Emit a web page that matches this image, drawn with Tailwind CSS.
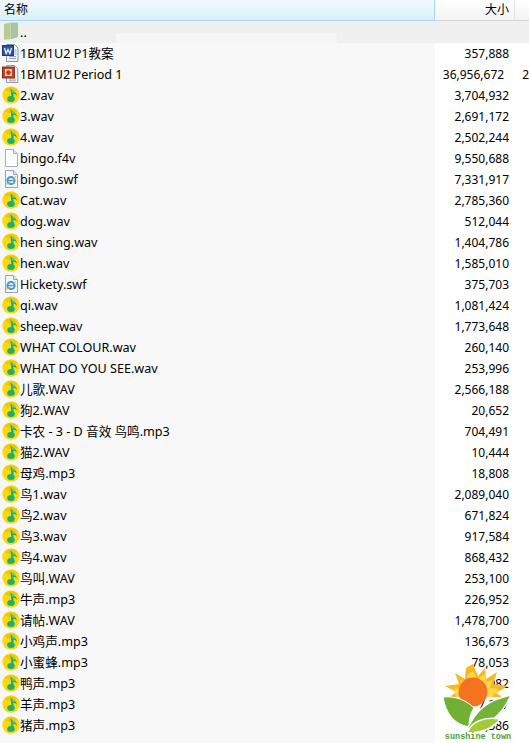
<!DOCTYPE html>
<html lang="zh">
<head>
  <meta charset="UTF-8" />
  <title>文件列表</title>
  <script src="https://cdn.jsdelivr.net/npm/@tailwindcss/browser@4"></script>
</head>
<body class="relative w-[529px] h-[743px] overflow-hidden bg-white text-[12.6px] leading-[21px] text-black font-['Noto_Sans','Noto_Sans_CJK_SC',sans-serif]">
  <svg class="hidden">
    <symbol id="music" viewBox="0 0 18 18">
      <circle cx="9" cy="9" r="8.7" fill="#fcd80c" />
      <path d="M2.5 4 C5 1 12 0 15.5 4 L12 6 L6 6 Z" fill="#f2c800" />
      <path d="M8.5 2 C10 5 14.5 5 15 10 C14 8.5 12.8 7.8 11.5 7.8 L11.5 13 L9.5 13 Z" fill="#1bb073" />
      <ellipse cx="9" cy="13" rx="3.8" ry="3" fill="#1bb073" />
      <path d="M9.8 3.8 C10.8 5.2 12.5 5.5 13.3 7 C12 6.5 11.2 6.2 10.3 6.2 Z" fill="#6ad3a4" />
    </symbol>
    <symbol id="page" viewBox="0 0 16 18">
      <path d="M2.5 .5 H10.5 L14.5 4.5 V17.5 H2.5 Z" fill="#fdfdfd" stroke="#a9aeb5" />
      <path d="M10.5 .5 V4.5 H14.5" fill="#e6e8eb" stroke="#a9aeb5" />
    </symbol>
    <symbol id="swf" viewBox="0 0 16 18">
      <path d="M2.5 .5 H10.5 L14.5 4.5 V17.5 H2.5 Z" fill="#f5f7fa" stroke="#9aa2ad" />
      <path d="M10.5 .5 V4.5 H14.5" fill="#e6e8eb" stroke="#9aa2ad" />
      <circle cx="8" cy="10.5" r="3.6" fill="none" stroke="#3f9be0" stroke-width="2" />
      <path d="M4.5 10.5 H11.5" stroke="#3f9be0" stroke-width="1.4" />
      <path d="M3 14 C6 14 11 10 13 6" fill="none" stroke="#e2b13c" stroke-width="1" />
    </symbol>
    <symbol id="doc" viewBox="0 0 17 18">
      <path d="M4.5 .5 H12.5 L16 4 V17.5 H4.5 Z" fill="#f3f6fb" stroke="#8b95a5" />
      <path d="M7 12.5 H14 M7 14.5 H14" stroke="#8aa5cc" />
      <path d="M12.5 6 H14.5 M12.5 8 H14.5 M12.5 10 H14.5" stroke="#8aa5cc" />
      <rect x=".5" y="1.5" width="11" height="10" fill="#2c55a8" stroke="#1c3a7a" />
      <path d="M2.5 4 L4.2 9.5 L6 5.5 L7.8 9.5 L9.5 4" fill="none" stroke="#fff" stroke-width="1.2" />
    </symbol>
    <symbol id="ppt" viewBox="0 0 17 18">
      <path d="M4.5 .5 H12.5 L16 4 V17.5 H4.5 Z" fill="#f3f6fb" stroke="#8b95a5" />
      <path d="M7 14 H14 M7 15.8 H14" stroke="#b8a6a0" />
      <rect x=".5" y="2" width="12" height="11" fill="#b5472a" stroke="#7f2d18" />
      <rect x="3" y="4" width="7" height="7" fill="#f2d5c5" />
      <circle cx="6.5" cy="7.5" r="2.4" fill="#c9381f" />
    </symbol>
    <symbol id="folder" viewBox="0 0 16 18">
      <path d="M1 2 L7 .5 H15 V15 L7 17.5 H1 Z" fill="#c3d5a8" />
      <path d="M8 1 H15 V15 L8 17 Z" fill="#a9c3a4" />
      <path d="M1 2 L7 1 V16.5 L1 17.5 Z" fill="#b5cc94" />
    </symbol>
  </svg>

  <div class="flex h-[21px] border-b border-[#d5d5d5] bg-gradient-to-b from-white to-[#f3f3f3]">
    <div class="w-[435px] h-[21px] pl-[4px] border-b border-r border-[#a5d8f3] bg-gradient-to-b from-[#f3fafe] to-[#d9eef9] text-[12px] leading-[19px]">名称</div>
    <div class="w-[74px] text-right text-[12px] leading-[19px]">大小</div>
    <div class="ml-[5px] border-l border-[#e3e3e3]"></div>
  </div>

  <div class="flex h-[22px] bg-[#f0f0f0]">
    <svg class="w-[16px] h-[18px] ml-[3px] mt-[1px] mr-[1px]"><use href="#folder" /></svg>
    <span class="leading-[24px]">..</span>
  </div>
  <div class="absolute left-[116px] top-[33px] w-[221px] h-[10px] bg-[#f6f6f6]"></div>

  <div class="h-[700px] bg-[linear-gradient(to_right,#f8f8f8_435px,white_435px)]">
    <div class="flex h-[21px]"><svg class="w-[17px] h-[18px] ml-[2px] mt-[1px] mr-[1px]"><use href="#doc" /></svg><span class="w-[415px]">1BM1U2 P1教案</span><span class="w-[74px] text-right text-[12px]">357,888</span></div>
    <div class="flex h-[21px]"><svg class="w-[17px] h-[18px] ml-[2px] mt-[1px] mr-[1px]"><use href="#ppt" /></svg><span class="w-[415px]">1BM1U2 Period 1</span><span class="w-[74px] text-right text-[12px]">36,956,672</span><span class="ml-[18px] text-[12px]">2</span></div>
    <div class="flex h-[21px]"><svg class="w-[18px] h-[18px] ml-[2px] mt-[1px]"><use href="#music" /></svg><span class="w-[415px]">2.wav</span><span class="w-[74px] text-right text-[12px]">3,704,932</span></div>
    <div class="flex h-[21px]"><svg class="w-[18px] h-[18px] ml-[2px] mt-[1px]"><use href="#music" /></svg><span class="w-[415px]">3.wav</span><span class="w-[74px] text-right text-[12px]">2,691,172</span></div>
    <div class="flex h-[21px]"><svg class="w-[18px] h-[18px] ml-[2px] mt-[1px]"><use href="#music" /></svg><span class="w-[415px]">4.wav</span><span class="w-[74px] text-right text-[12px]">2,502,244</span></div>
    <div class="flex h-[21px]"><svg class="w-[16px] h-[18px] ml-[3px] mt-[1px] mr-[1px]"><use href="#page" /></svg><span class="w-[415px]">bingo.f4v</span><span class="w-[74px] text-right text-[12px]">9,550,688</span></div>
    <div class="flex h-[21px]"><svg class="w-[16px] h-[18px] ml-[3px] mt-[1px] mr-[1px]"><use href="#swf" /></svg><span class="w-[415px]">bingo.swf</span><span class="w-[74px] text-right text-[12px]">7,331,917</span></div>
    <div class="flex h-[21px]"><svg class="w-[18px] h-[18px] ml-[2px] mt-[1px]"><use href="#music" /></svg><span class="w-[415px]">Cat.wav</span><span class="w-[74px] text-right text-[12px]">2,785,360</span></div>
    <div class="flex h-[21px]"><svg class="w-[18px] h-[18px] ml-[2px] mt-[1px]"><use href="#music" /></svg><span class="w-[415px]">dog.wav</span><span class="w-[74px] text-right text-[12px]">512,044</span></div>
    <div class="flex h-[21px]"><svg class="w-[18px] h-[18px] ml-[2px] mt-[1px]"><use href="#music" /></svg><span class="w-[415px]">hen sing.wav</span><span class="w-[74px] text-right text-[12px]">1,404,786</span></div>
    <div class="flex h-[21px]"><svg class="w-[18px] h-[18px] ml-[2px] mt-[1px]"><use href="#music" /></svg><span class="w-[415px]">hen.wav</span><span class="w-[74px] text-right text-[12px]">1,585,010</span></div>
    <div class="flex h-[21px]"><svg class="w-[16px] h-[18px] ml-[3px] mt-[1px] mr-[1px]"><use href="#swf" /></svg><span class="w-[415px]">Hickety.swf</span><span class="w-[74px] text-right text-[12px]">375,703</span></div>
    <div class="flex h-[21px]"><svg class="w-[18px] h-[18px] ml-[2px] mt-[1px]"><use href="#music" /></svg><span class="w-[415px]">qi.wav</span><span class="w-[74px] text-right text-[12px]">1,081,424</span></div>
    <div class="flex h-[21px]"><svg class="w-[18px] h-[18px] ml-[2px] mt-[1px]"><use href="#music" /></svg><span class="w-[415px]">sheep.wav</span><span class="w-[74px] text-right text-[12px]">1,773,648</span></div>
    <div class="flex h-[21px]"><svg class="w-[18px] h-[18px] ml-[2px] mt-[1px]"><use href="#music" /></svg><span class="w-[415px]">WHAT COLOUR.wav</span><span class="w-[74px] text-right text-[12px]">260,140</span></div>
    <div class="flex h-[21px]"><svg class="w-[18px] h-[18px] ml-[2px] mt-[1px]"><use href="#music" /></svg><span class="w-[415px]">WHAT DO YOU SEE.wav</span><span class="w-[74px] text-right text-[12px]">253,996</span></div>
    <div class="flex h-[21px]"><svg class="w-[18px] h-[18px] ml-[2px] mt-[1px]"><use href="#music" /></svg><span class="w-[415px]">儿歌.WAV</span><span class="w-[74px] text-right text-[12px]">2,566,188</span></div>
    <div class="flex h-[21px]"><svg class="w-[18px] h-[18px] ml-[2px] mt-[1px]"><use href="#music" /></svg><span class="w-[415px]">狗2.WAV</span><span class="w-[74px] text-right text-[12px]">20,652</span></div>
    <div class="flex h-[21px]"><svg class="w-[18px] h-[18px] ml-[2px] mt-[1px]"><use href="#music" /></svg><span class="w-[415px]">卡农 - 3 - D 音效 鸟鸣.mp3</span><span class="w-[74px] text-right text-[12px]">704,491</span></div>
    <div class="flex h-[21px]"><svg class="w-[18px] h-[18px] ml-[2px] mt-[1px]"><use href="#music" /></svg><span class="w-[415px]">猫2.WAV</span><span class="w-[74px] text-right text-[12px]">10,444</span></div>
    <div class="flex h-[21px]"><svg class="w-[18px] h-[18px] ml-[2px] mt-[1px]"><use href="#music" /></svg><span class="w-[415px]">母鸡.mp3</span><span class="w-[74px] text-right text-[12px]">18,808</span></div>
    <div class="flex h-[21px]"><svg class="w-[18px] h-[18px] ml-[2px] mt-[1px]"><use href="#music" /></svg><span class="w-[415px]">鸟1.wav</span><span class="w-[74px] text-right text-[12px]">2,089,040</span></div>
    <div class="flex h-[21px]"><svg class="w-[18px] h-[18px] ml-[2px] mt-[1px]"><use href="#music" /></svg><span class="w-[415px]">鸟2.wav</span><span class="w-[74px] text-right text-[12px]">671,824</span></div>
    <div class="flex h-[21px]"><svg class="w-[18px] h-[18px] ml-[2px] mt-[1px]"><use href="#music" /></svg><span class="w-[415px]">鸟3.wav</span><span class="w-[74px] text-right text-[12px]">917,584</span></div>
    <div class="flex h-[21px]"><svg class="w-[18px] h-[18px] ml-[2px] mt-[1px]"><use href="#music" /></svg><span class="w-[415px]">鸟4.wav</span><span class="w-[74px] text-right text-[12px]">868,432</span></div>
    <div class="flex h-[21px]"><svg class="w-[18px] h-[18px] ml-[2px] mt-[1px]"><use href="#music" /></svg><span class="w-[415px]">鸟叫.WAV</span><span class="w-[74px] text-right text-[12px]">253,100</span></div>
    <div class="flex h-[21px]"><svg class="w-[18px] h-[18px] ml-[2px] mt-[1px]"><use href="#music" /></svg><span class="w-[415px]">牛声.mp3</span><span class="w-[74px] text-right text-[12px]">226,952</span></div>
    <div class="flex h-[21px]"><svg class="w-[18px] h-[18px] ml-[2px] mt-[1px]"><use href="#music" /></svg><span class="w-[415px]">请帖.WAV</span><span class="w-[74px] text-right text-[12px]">1,478,700</span></div>
    <div class="flex h-[21px]"><svg class="w-[18px] h-[18px] ml-[2px] mt-[1px]"><use href="#music" /></svg><span class="w-[415px]">小鸡声.mp3</span><span class="w-[74px] text-right text-[12px]">136,673</span></div>
    <div class="flex h-[21px]"><svg class="w-[18px] h-[18px] ml-[2px] mt-[1px]"><use href="#music" /></svg><span class="w-[415px]">小蜜蜂.mp3</span><span class="w-[74px] text-right text-[12px]">78,053</span></div>
    <div class="flex h-[21px]"><svg class="w-[18px] h-[18px] ml-[2px] mt-[1px]"><use href="#music" /></svg><span class="w-[415px]">鸭声.mp3</span><span class="w-[74px] text-right text-[12px]">1,082</span></div>
    <div class="flex h-[21px]"><svg class="w-[18px] h-[18px] ml-[2px] mt-[1px]"><use href="#music" /></svg><span class="w-[415px]">羊声.mp3</span><span class="w-[74px] text-right text-[12px]">7,207</span></div>
    <div class="flex h-[21px]"><svg class="w-[18px] h-[18px] ml-[2px] mt-[1px]"><use href="#music" /></svg><span class="w-[415px]">猪声.mp3</span><span class="w-[74px] text-right text-[12px]">1,586</span></div>
  </div>

  <!-- watermark over the bottom right corner -->
  <div class="absolute left-[442px] top-[664px] w-[72px] flex flex-col items-center">
    <svg class="w-[72px] h-[69px]" viewBox="0 0 72 69">
      <path d="M31 0 L36 12 L43 4 L44 15 L55 8 L51 20 L66 22 L54 29 L60 33 L8 33 L14 28 L3 22 L17 20 L13 9 L23 15 L24 4 Z" fill="#fbb81e" />
      <path d="M31 7 L35 15 L43 10 L44 18 L50 16 L48 24 L57 25 L50 33 L14 33 L12 25 L21 24 L18 16 L25 18 L26 10 Z" fill="#fdd64a" />
      <circle cx="31" cy="28" r="14.5" fill="#f47320" />
      <path d="M1 33 C14 32 24 36 32 44 C28 50 27 56 27 63 C12 60 4 50 1 33 Z" fill="#6fb035" stroke="#fff" stroke-width="1" />
      <path d="M69 31 C52 35 38 41 29 58 L25 65 C44 64 60 52 69 31 Z" fill="#74b33a" stroke="#fff" stroke-width="1.5" />
      <path d="M25 69 C29 58 42 52 58 55 C52 64 38 70 25 69 Z" fill="#a5c93a" stroke="#fff" stroke-width="1.5" />
    </svg>
    <span class="text-[8.5px] leading-[9px] font-bold text-[#4f9a3a] font-['Liberation_Mono',monospace]">sunshine town</span>
  </div>
</body>
</html>
